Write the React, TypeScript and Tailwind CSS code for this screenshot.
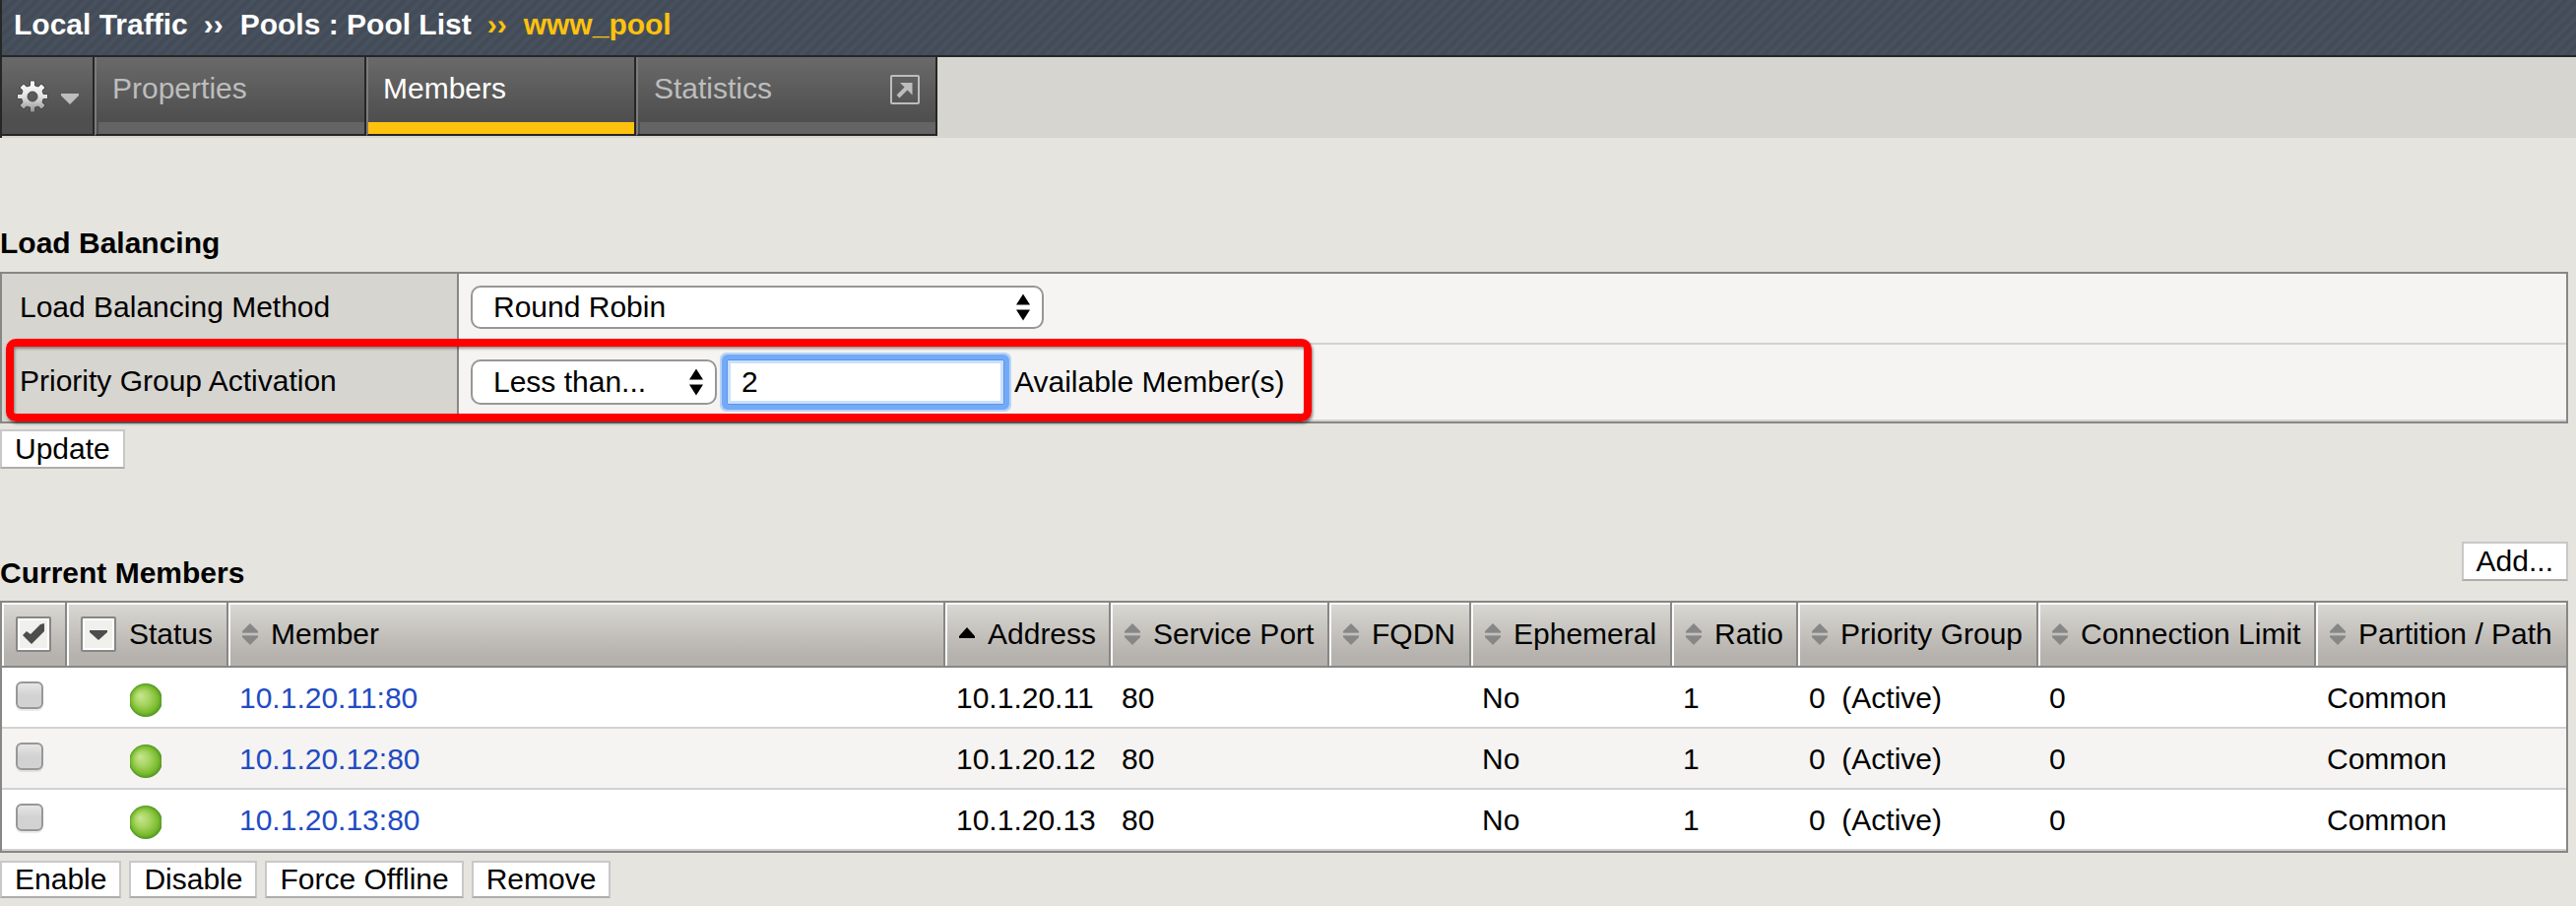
import { useState } from "react";
import type { ReactNode } from "react";

const members = [
  { name: "10.1.20.11:80", address: "10.1.20.11" },
  { name: "10.1.20.12:80", address: "10.1.20.12" },
  { name: "10.1.20.13:80", address: "10.1.20.13" },
];

const sortable = [
  "Service Port",
  "FQDN",
  "Ephemeral",
  "Ratio",
  "Priority Group",
  "Connection Limit",
  "Partition / Path",
];

function GearIcon() {
  return (
    <svg width="32" height="34" viewBox="-16 -17 32 34" aria-hidden="true">
      <defs>
        <linearGradient id="gear" x1="0" y1="0" x2="0" y2="1">
          <stop offset="0" stopColor="#ffffff" />
          <stop offset="0.5" stopColor="#e2e2e2" />
          <stop offset="1" stopColor="#8f8f8f" />
        </linearGradient>
      </defs>
      <path
        fill="url(#gear)"
        stroke="#4a4a4a"
        strokeWidth="1"
        fillRule="evenodd"
        d="M-2.500-16H2.500V-11L6-10L9-13L13-9L10-6L11-2.500H15.500V2.500H11L10 6L13 9L9 13L6 10L2.500 11V16H-2.500V11L-6 10L-9 13L-13 9L-10 6L-11 2.500H-15.500V-2.500H-11L-10-6L-13-9L-9-13L-6-10L-2.500-11ZM0-5A5 5 0 1 0 0 5A5 5 0 1 0 0-5Z"
      />
    </svg>
  );
}

function PopoutIcon() {
  return (
    <svg width="30" height="30" viewBox="0 0 30 30" fill="none" aria-hidden="true">
      <rect x="1" y="1" width="28" height="28" rx="1" stroke="#bdbdbd" strokeWidth="2" />
      <path d="M8 22L18 12" stroke="#bdbdbd" strokeWidth="4" />
      <path d="M10 8H22.500V20.500Z" fill="#bdbdbd" />
    </svg>
  );
}

function SortIcon() {
  return (
    <svg width="16" height="22" viewBox="0 0 16 22" className="shrink-0" aria-hidden="true">
      <path d="M8 0L16 8V10H0V8Z" fill="#878787" />
      <path d="M0 12H16V14L8 22L0 14Z" fill="#878787" />
      <path d="M0 9.500H16M0 12.500H16" stroke="#9b9b99" strokeWidth="1" />
    </svg>
  );
}

function AscIcon() {
  return (
    <svg width="16" height="22" viewBox="0 0 16 22" className="shrink-0" aria-hidden="true">
      <path d="M8 4L16 13V15H0V13Z" fill="#000" />
    </svg>
  );
}

function StatusBall() {
  return (
    <svg width="32" height="34" viewBox="0 0 32 34" role="img" aria-label="Available">
      <defs>
        <radialGradient id="ball" cx="0.5" cy="0.5" r="0.5" fx="0.32" fy="0.36">
          <stop offset="0" stopColor="#c8e693" />
          <stop offset="0.45" stopColor="#a6d460" />
          <stop offset="0.82" stopColor="#78ba2c" />
          <stop offset="1" stopColor="#4f9326" />
        </radialGradient>
      </defs>
      <circle cx="16" cy="17" r="17" fill="url(#ball)" />
    </svg>
  );
}

function UpDown() {
  return (
    <svg
      width="14"
      height="28"
      viewBox="0 0 14 28"
      className="pointer-events-none absolute top-1/2 right-[14px] -translate-y-1/2"
      aria-hidden="true"
    >
      <path d="M7 0.500L14 11.500H0Z" fill="#000" />
      <path d="M0 16.500H14L7 27.500Z" fill="#000" />
    </svg>
  );
}

function PushButton({ children, size = "h-10" }: { children: ReactNode; size?: string }) {
  return (
    <button
      type="button"
      className={`${size} border-2 border-[#c8c8c8] border-b-[#adadad] bg-white px-[13px] leading-[34px]`}
    >
      {children}
    </button>
  );
}

function Select({ id, size, options }: { id: string; size: string; options: string[] }) {
  return (
    <div className={`relative ${size}`}>
      <select
        id={id}
        className="block size-full appearance-none rounded-[10px] border-2 border-[#979797] bg-white pr-8 pl-[21px] leading-[34px]"
      >
        {options.map((o) => (
          <option key={o}>{o}</option>
        ))}
      </select>
      <UpDown />
    </div>
  );
}

function Tab({ label, active, external }: { label: string; active?: boolean; external?: boolean }) {
  return (
    <a
      href="#"
      aria-current={active ? "page" : undefined}
      className={`flex h-20 flex-col border-r-2 border-b-2 border-l-2 border-r-[#262626] border-b-[#262626] border-l-[#7c7c7c] bg-linear-to-b from-[#6a6a6a] to-[#4f4f4f] to-80% ${
        active
          ? "w-[274px] text-white"
          : external
            ? "w-[306px] pl-[2px] text-[#bdbdbd]"
            : "w-[276px] pl-[2px] text-[#bdbdbd]"
      }`}
    >
      <span className={`flex flex-1 items-start justify-between pt-[15px] pr-4 ${active ? "pl-[15px]" : "pl-[14px]"}`}>
        <span>{label}</span>
        {external && (
          <span className="pt-[3px]">
            <PopoutIcon />
          </span>
        )}
      </span>
      <span className={`h-3 ${active ? "bg-[#ffc20e]" : "bg-[#646464]"}`} />
    </a>
  );
}

function HeadCell({ children, last }: { children: ReactNode; last?: boolean }) {
  return (
    <th
      scope="col"
      className={`h-16 p-0 text-left font-normal whitespace-nowrap ${last ? "" : "border-r-2 border-[#878785]"}`}
    >
      <div className="flex h-16 items-center border-t-2 border-l-2 border-[#fbfbfa] bg-linear-to-b from-[#d8d7d2] to-[#b5b1ac] to-85% pb-[2px] pl-3">
        {children}
      </div>
    </th>
  );
}

function SortHeader({ label, sorted }: { label: string; sorted?: boolean }) {
  return (
    <button type="button" className="flex items-center gap-[13px] leading-[34px]">
      {sorted ? <AscIcon /> : <SortIcon />}
      {label}
    </button>
  );
}

function Cell({ children }: { children?: ReactNode }) {
  return (
    <td className="h-[62px] border-b-2 border-[#d2d2d2] pt-[14px] pb-3 pl-[11px] align-top leading-[34px] whitespace-nowrap">
      {children}
    </td>
  );
}

export default function App() {
  const [threshold, setThreshold] = useState("2");
  return (
    <div className="min-h-screen bg-[#e5e4df] font-['Liberation_Sans',Arial,sans-serif] text-[30px] leading-[34px] text-black">
      <header className="border-l-2 border-[#262626]">
        <nav
          aria-label="Breadcrumb"
          className="flex h-[58px] items-start border-b-2 border-[#262626] bg-[repeating-linear-gradient(135deg,#434b57_0px,#434b57_2px,#47525e_5px,#47525e_6px,#434b57_8px)] pt-2 pl-3 font-bold text-white"
        >
          <a href="#">Local Traffic</a>
          <span className="pr-[17px] pl-4">››</span>
          <a href="#">Pools : Pool List</a>
          <span className="pr-[17px] pl-4 text-[#ffc20e]">››</span>
          <span className="text-[#ffc20e]">www_pool</span>
        </nav>
        <div className="flex h-[82px] items-start bg-[#d6d5d0]">
          <button
            type="button"
            aria-label="Options"
            className="flex h-20 w-[94px] items-center gap-[13px] border-r-2 border-b-2 border-[#262626] bg-linear-to-b from-[#6a6a6a] to-[#4f4f4f] to-80% pt-[2px] pl-[15px]"
          >
            <GearIcon />
            <svg width="18" height="16" viewBox="0 0 18 16" aria-hidden="true">
              <path d="M0 5H18V7L9 16L0 7Z" fill="#bdbdbd" />
            </svg>
          </button>
          <Tab label="Properties" />
          <Tab label="Members" active />
          <Tab label="Statistics" external />
        </div>
      </header>

      <main className="pt-[90px] pr-2">
        <section>
          <h2 className="font-bold">Load Balancing</h2>
          <div className="relative mt-3">
            <table className="w-full table-fixed border-separate border-spacing-0 border-2 border-[#878785] bg-[#f5f4f2]">
              <colgroup>
                <col className="w-[464px]" />
                <col />
              </colgroup>
              <tbody>
                <tr>
                  <th
                    scope="row"
                    className="h-[72px] border-r-2 border-b-2 border-r-[#878785] border-b-[#d2d2d2] bg-[#d6d5d0] p-0 pb-[2px] pl-[18px] text-left font-normal"
                  >
                    <label htmlFor="method">Load Balancing Method</label>
                  </th>
                  <td className="border-b-2 border-[#d2d2d2] p-0 pb-[2px] pl-3">
                    <Select
                      id="method"
                      size="h-11 w-[582px]"
                      options={["Round Robin", "Ratio (member)", "Least Connections (member)"]}
                    />
                  </td>
                </tr>
                <tr>
                  <th
                    scope="row"
                    className="h-[78px] border-r-2 border-b-2 border-r-[#878785] border-b-[#d2d2d2] bg-[#d6d5d0] p-0 pb-[2px] pl-[18px] text-left font-normal"
                  >
                    <label htmlFor="priority">Priority Group Activation</label>
                  </th>
                  <td className="border-b-2 border-[#d2d2d2] p-0 pl-3">
                    <div className="flex items-center">
                      <Select id="priority" size="h-[46px] w-[250px]" options={["Less than...", "Disabled"]} />
                      <input
                        id="threshold"
                        type="text"
                        value={threshold}
                        onChange={(e) => setThreshold(e.target.value)}
                        className="ml-[10px] h-[46px] w-[282px] rounded-[2px] border border-[#5a94e6] bg-white pl-[14px] leading-[34px] shadow-[inset_0_0_0_3px_#c9dffb,0_0_0_5px_#72aaf8,0_0_0_7px_#b9d3f5] outline-none"
                      />
                      <label htmlFor="threshold" className="ml-[10px]">
                        Available Member(s)
                      </label>
                    </div>
                  </td>
                </tr>
              </tbody>
            </table>
            <div className="pointer-events-none absolute top-[68px] left-[6px] h-[84px] w-[1326px] rounded-[10px] border-8 border-[#ff0000] shadow-[1px_2px_3px_rgba(0,0,0,0.5),inset_1px_2px_3px_rgba(0,0,0,0.4)]" />
          </div>
          <div className="mt-[6px] flex">
            <PushButton>Update</PushButton>
          </div>
        </section>

        <section className="pt-[74px]">
          <div className="flex items-start justify-between">
            <h2 className="pt-[15px] pb-[11px] font-bold">Current Members</h2>
            <PushButton>Add...</PushButton>
          </div>
          <table className="w-full table-fixed border-separate border-spacing-0 border-2 border-[#878785] bg-white">
            <colgroup>
              <col className="w-[66px]" />
              <col className="w-[164px]" />
              <col />
              <col className="w-[168px]" />
              <col className="w-[222px]" />
              <col className="w-[144px]" />
              <col className="w-[204px]" />
              <col className="w-[128px]" />
              <col className="w-[244px]" />
              <col className="w-[282px]" />
              <col className="w-[254px]" />
            </colgroup>
            <thead>
              <tr>
                <HeadCell>
                  <button type="button" aria-label="Select all" className="block">
                    <svg width="36" height="36" viewBox="0 0 36 36" aria-hidden="true">
                      <rect x="1" y="1" width="34" height="34" rx="1" fill="#f0f0ed" stroke="#878785" strokeWidth="2" />
                      <rect x="3" y="3" width="30" height="30" fill="none" stroke="#fff" strokeWidth="2" />
                      <path d="M7 19L11 15L15 18L25 8L29 7V15L16 28Z" fill="#4d4d4d" />
                    </svg>
                  </button>
                </HeadCell>
                <HeadCell>
                  <button type="button" className="flex items-center gap-[13px] leading-[34px]">
                    <svg width="36" height="36" viewBox="0 0 36 36" aria-hidden="true">
                      <rect x="1" y="1" width="34" height="34" rx="1" fill="#f0f0ed" stroke="#878785" strokeWidth="2" />
                      <rect x="3" y="3" width="30" height="30" fill="none" stroke="#fff" strokeWidth="2" />
                      <path d="M9 14H27V16L18 24L9 16Z" fill="#4d4d4d" />
                    </svg>
                    Status
                  </button>
                </HeadCell>
                <HeadCell>
                  <SortHeader label="Member" />
                </HeadCell>
                <HeadCell>
                  <SortHeader label="Address" sorted />
                </HeadCell>
                {sortable.map((label, i) => (
                  <HeadCell key={label} last={i === sortable.length - 1}>
                    <SortHeader label={label} />
                  </HeadCell>
                ))}
              </tr>
            </thead>
            <tbody className="[&>tr:first-child>td]:border-t-2 [&>tr:first-child>td]:border-t-[#878785]">
              {members.map((m) => (
                <tr key={m.name} className="even:bg-[#f5f4f2]">
                  <td className="border-b-2 border-[#d2d2d2] p-0 pt-[14px] pl-[14px] align-top">
                    <input
                      type="checkbox"
                      aria-label={`Select ${m.name}`}
                      className="block size-7 appearance-none rounded-md border-2 border-[#979797] bg-linear-to-b from-[#e6e6e6] to-[#d2d2d2] to-50% shadow-[0_2px_0_rgba(0,0,0,0.08)]"
                    />
                  </td>
                  <td className="border-b-2 border-[#d2d2d2] p-0 pt-4 pl-16 align-top">
                    <StatusBall />
                  </td>
                  <Cell>
                    <a href="#" className="text-[#224bc3]">
                      {m.name}
                    </a>
                  </Cell>
                  <Cell>{m.address}</Cell>
                  <Cell>80</Cell>
                  <Cell />
                  <Cell>No</Cell>
                  <Cell>1</Cell>
                  <Cell>0{"\u00a0\u00a0"}(Active)</Cell>
                  <Cell>0</Cell>
                  <Cell>Common</Cell>
                </tr>
              ))}
            </tbody>
          </table>
          <div className="mt-2 flex gap-2">
            <PushButton size="h-[38px]">Enable</PushButton>
            <PushButton size="h-[38px]">Disable</PushButton>
            <PushButton size="h-[38px]">Force Offline</PushButton>
            <PushButton size="h-[38px]">Remove</PushButton>
          </div>
        </section>
      </main>
    </div>
  );
}
